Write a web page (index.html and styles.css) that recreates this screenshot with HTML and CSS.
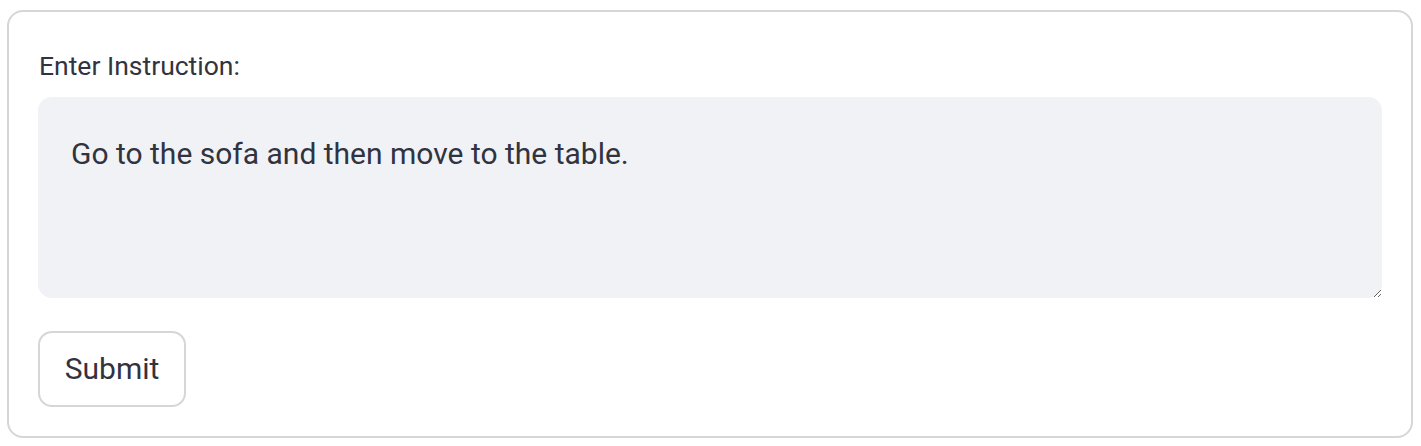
FILE: index.html
```html
<!DOCTYPE html>
<html>
<head>
<meta charset="utf-8">
<link rel="stylesheet" href="styles.css">
</head>
<body>
<form class="card">
  <label class="label" for="instr">Enter Instruction:</label>
  <textarea id="instr" class="input">Go to the sofa and then move to the table.</textarea>
  <div class="actions">
    <button type="button" class="btn">Submit</button>
  </div>
</form>
</body>
</html>
```

FILE: styles.css
```css
html, body {
  margin: 0;
  background: #ffffff;
}
body {
  padding: 10px 8px 8px 7px;
  font-family: Roboto, "Liberation Sans", sans-serif;
  color: #31333f;
}
.card {
  box-sizing: border-box;
  height: 428px;
  border: 2px solid #d6d6d9;
  border-radius: 16px;
  padding: 38px 29px 0 29px;
  display: flex;
  flex-direction: column;
}
.label {
  font-size: 26.5px;
  line-height: 32px;
  height: 32px;
  margin-bottom: 15px;
  padding-left: 1px;
}
.input {
  box-sizing: border-box;
  height: 201px;
  width: 100%;
  border: none;
  border-radius: 14px;
  background: #f0f2f6;
  color: #31333f;
  font-family: inherit;
  font-size: 30px;
  line-height: 40px;
  padding: 37px 33px 30px 33px;
  margin: 0;
  outline: none;
}
.actions {
  margin-top: 33px;
  display: flex;
}
.btn {
  box-sizing: border-box;
  width: 148px;
  height: 76px;
  border: 2px solid #d6d6d9;
  border-radius: 14px;
  background: #ffffff;
  color: #31333f;
  font-family: inherit;
  font-size: 30px;
  padding: 0 0 2px 0;
}
```
